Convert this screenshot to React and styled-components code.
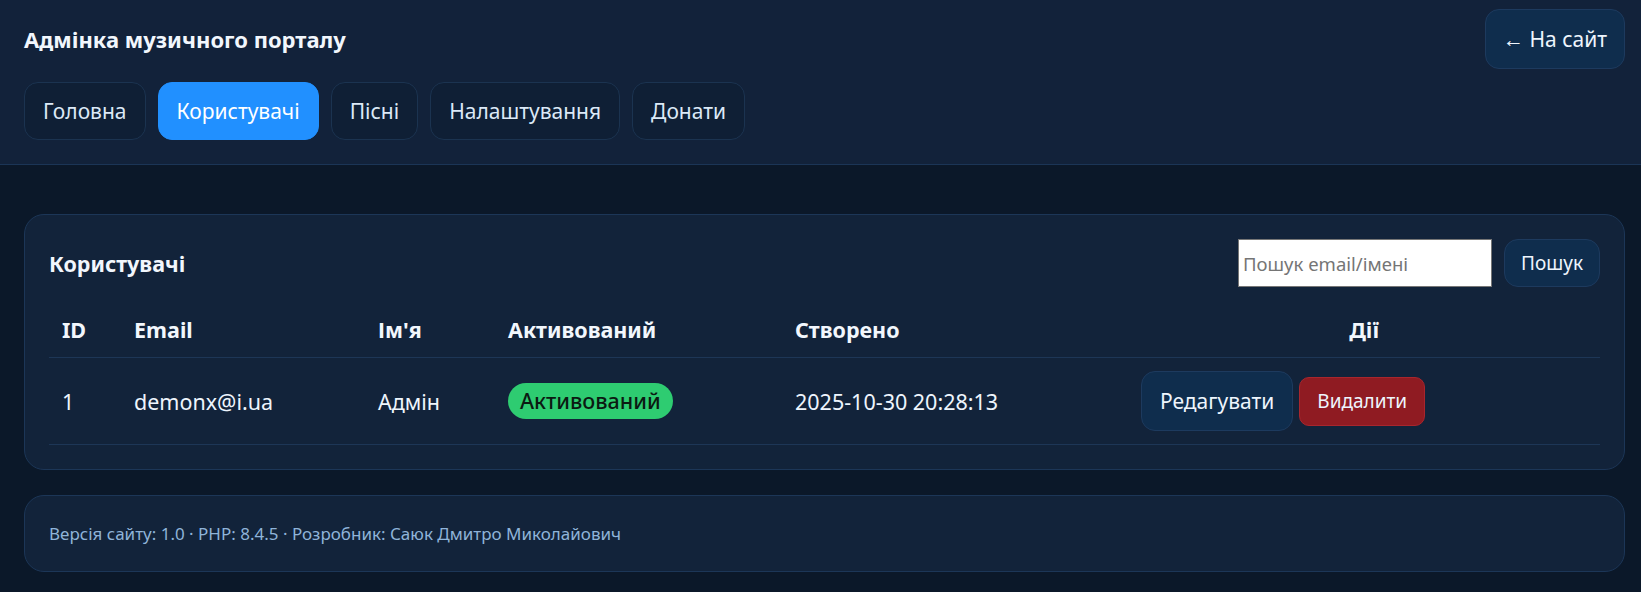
import React from 'react'
import styled, { createGlobalStyle } from 'styled-components'

const GlobalStyle = createGlobalStyle`
  body {
    margin: 0;
    background: #0b1829;
    color: #e8f1fb;
    font-family: 'Noto Sans', 'Open Sans', sans-serif;
  }
`

const Header = styled.header`
  background: #12223a;
  border-bottom: 1px solid #1b3556;
  padding: 9px 16px 24px 24px;
`

const TopRow = styled.div`
  display: flex;
  justify-content: space-between;
  align-items: center;
`

const Title = styled.h1`
  margin: 0;
  font-size: 22px;
  font-weight: 700;
  color: #f2f7fd;
`

const BackLink = styled.a`
  display: inline-flex;
  align-items: center;
  height: 60px;
  box-sizing: border-box;
  padding: 0 17px;
  background: #0f2d4d;
  border: 1px solid #1d3a5e;
  border-radius: 14px;
  color: #eef5fd;
  font-size: 21px;
  text-decoration: none;
`

const Nav = styled.nav`
  display: flex;
  gap: 12px;
  margin-top: 13px;
`

const Tab = styled.a`
  display: inline-flex;
  align-items: center;
  height: 58px;
  box-sizing: border-box;
  padding: 0 18px;
  border-radius: 14px;
  border: 1px solid ${p => (p.$active ? '#2190ff' : '#1b3350')};
  background: ${p => (p.$active ? '#2190ff' : '#0f1f35')};
  color: ${p => (p.$active ? '#ffffff' : '#dce9f7')};
  font-size: 21px;
  text-decoration: none;
`

const Main = styled.main`
  padding: 49px 16px 24px 24px;
  display: flex;
  flex-direction: column;
  gap: 25px;
`

const Card = styled.section`
  background: #12233a;
  border: 1px solid #1c3657;
  border-radius: 20px;
  padding: ${p => p.$pad || '24px'};
`

const Toolbar = styled.div`
  display: flex;
  align-items: center;
  justify-content: space-between;
  margin-bottom: 15px;
`

const CardTitle = styled.h2`
  margin: 0;
  font-size: 21.5px;
  font-weight: 700;
  color: #f2f7fd;
`

const SearchForm = styled.form`
  display: flex;
  align-items: center;
  gap: 12px;
`

const SearchInput = styled.input`
  width: 254px;
  height: 48px;
  box-sizing: border-box;
  border: 1px solid #767676;
  background: #ffffff;
  padding: 0 4px;
  font-family: 'Noto Sans', sans-serif;
  font-size: 18.5px;
  color: #222;
  &::placeholder {
    color: #757575;
  }
`

const Button = styled.button`
  height: ${p => p.$h || '48px'};
  box-sizing: border-box;
  padding: 0 ${p => p.$px || '16px'};
  border-radius: ${p => p.$r || '14px'};
  border: 1px solid ${p => (p.$danger ? '#a8262d' : '#1d3a5e')};
  background: ${p => (p.$danger ? '#8f1b22' : '#0f2d4d')};
  color: #eef5fd;
  font-family: 'Noto Sans', sans-serif;
  font-size: ${p => p.$fs || '21px'};
  cursor: pointer;
`

const Table = styled.table`
  width: 100%;
  border-collapse: collapse;
`

const Th = styled.th`
  text-align: ${p => p.$align || 'left'};
  width: ${p => p.$w || 'auto'};
  padding: 13px;
  font-size: 21.5px;
  font-weight: 700;
  color: #f2f7fd;
  border-bottom: 1px solid #1d3656;
`

const Td = styled.td`
  padding: 13px;
  font-size: 21.5px;
  color: #eef5fd;
  border-bottom: 1px solid #1d3656;
`

const Actions = styled.div`
  display: flex;
  align-items: center;
  gap: 6px;
`

const Badge = styled.span`
  display: inline-block;
  padding: 3px 12px;
  border-radius: 999px;
  background: #2ecc71;
  color: #0b1a12;
  font-size: 21.5px;
  font-weight: 500;
  line-height: 1.35;
`

const FooterText = styled.p`
  margin: 0;
  font-size: 17px;
  color: #8fb4d9;
`

const App = () => {
  const tabs = ['Головна', 'Користувачі', 'Пісні', 'Налаштування', 'Донати']
  return (
    <>
      <GlobalStyle />
      <Header>
        <TopRow>
          <Title>Адмінка музичного порталу</Title>
          <BackLink href="#">← На сайт</BackLink>
        </TopRow>
        <Nav>
          {tabs.map(t => (
            <Tab key={t} href="#" $active={t === 'Користувачі'}>{t}</Tab>
          ))}
        </Nav>
      </Header>
      <Main>
        <Card>
          <Toolbar>
            <CardTitle>Користувачі</CardTitle>
            <SearchForm onSubmit={e => e.preventDefault()}>
              <SearchInput placeholder="Пошук email/імені" />
              <Button type="submit" $px="16px" $fs="19px">Пошук</Button>
            </SearchForm>
          </Toolbar>
          <Table>
            <thead>
              <tr>
                <Th $w="46px">ID</Th>
                <Th $w="218px">Email</Th>
                <Th $w="104px">Ім'я</Th>
                <Th $w="261px">Активований</Th>
                <Th $w="320px">Створено</Th>
                <Th $align="center">Дії</Th>
              </tr>
            </thead>
            <tbody>
              <tr>
                <Td>1</Td>
                <Td>demonx@i.ua</Td>
                <Td>Адмін</Td>
                <Td><Badge>Активований</Badge></Td>
                <Td>2025-10-30 20:28:13</Td>
                <Td>
                  <Actions>
                    <Button $h="60px" $px="18px">Редагувати</Button>
                    <Button $danger $h="49px" $r="10px" $px="17px" $fs="19px">Видалити</Button>
                  </Actions>
                </Td>
              </tr>
            </tbody>
          </Table>
        </Card>
        <Card $pad="26px 24px">
          <FooterText>Версія сайту: 1.0 · PHP: 8.4.5 · Розробник: Саюк Дмитро Миколайович</FooterText>
        </Card>
      </Main>
    </>
  )
}

export default App
